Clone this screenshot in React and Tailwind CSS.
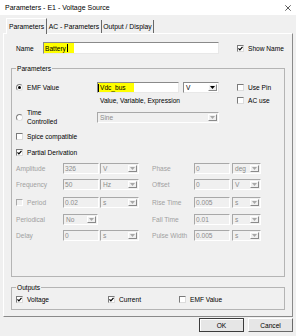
import React from "react";

function CheckMark({ color = "#000" }) {
  return (
    <svg width="5" height="5" viewBox="0 0 5 5">
      <path d="M0.5 2.3 L1.9 3.9 L4.5 0.8" fill="none" stroke={color} strokeWidth="1.2" />
    </svg>
  );
}

function Box({ checked, disabled }) {
  return (
    <span
      className={
        disabled
          ? "flex h-[7px] w-[7px] shrink-0 items-center justify-center border border-t-[#a8a8a8] border-l-[#a8a8a8] border-b-white border-r-white bg-[#f0f0f0]"
          : "flex h-[7px] w-[7px] shrink-0 items-center justify-center border border-t-[#7a7a7a] border-l-[#7a7a7a] border-b-[#dcdcdc] border-r-[#dcdcdc] bg-white"
      }
    >
      {checked && <CheckMark />}
    </span>
  );
}

function Radio({ checked }) {
  return (
    <span className="flex h-[7px] w-[7px] shrink-0 items-center justify-center rounded-full border border-t-[#808080] border-l-[#808080] border-b-[#e0e0e0] border-r-[#e0e0e0] bg-white">
      {checked && <span className="h-[3px] w-[3px] rounded-full bg-black" />}
    </span>
  );
}

function Arrow({ disabled }) {
  return (
    <span className="flex h-full w-[9px] shrink-0 items-center justify-center border border-t-white border-l-white border-b-[#8a8a8a] border-r-[#8a8a8a] bg-[#f0f0f0]">
      <svg width="5" height="3" viewBox="0 0 5 3">
        <path d="M0 0 H5 L2.5 3 Z" fill={disabled ? "#a8a8a8" : "#000"} />
      </svg>
    </span>
  );
}

function Sel({ w, value, disabled }) {
  return (
    <div
      className={`flex h-[11px] shrink-0 items-stretch border p-[1px] ${w} ${
        disabled
          ? "border-t-[#a8a8a8] border-l-[#a8a8a8] border-b-white border-r-white bg-[#f0f0f0] text-[#8c8c8c]"
          : "border-t-[#8a8a8a] border-l-[#8a8a8a] border-b-[#e8e8e8] border-r-[#e8e8e8] bg-white text-black"
      }`}
    >
      <span className="flex flex-1 items-center pl-[1px]">{value}</span>
      <Arrow disabled={disabled} />
    </div>
  );
}

function DInput({ w, value }) {
  return (
    <div
      className={`flex h-[11px] shrink-0 items-center border border-t-[#a8a8a8] border-l-[#a8a8a8] border-b-white border-r-white bg-[#f0f0f0] pl-[1px] text-[#8c8c8c] ${w}`}
    >
      {value}
    </div>
  );
}

function Label({ children }) {
  return <span className="text-[#a0a0a0]">{children}</span>;
}

function PRow({ mt, left, right }) {
  return (
    <div className={`flex h-[11px] items-center ${mt}`}>
      <div className="flex w-[136px] items-center">{left}</div>
      <div className="flex items-center">{right}</div>
    </div>
  );
}

export default function App() {
  return (
    <div className="relative flex h-[336px] w-[296px] flex-col overflow-hidden bg-[#f0f0f0] font-['Liberation_Sans',Arial,sans-serif] text-[6.6px] leading-[9px] text-black">
      {/* title bar */}
      <div className="flex h-[15px] shrink-0 items-center justify-between bg-white pl-[5px] pr-[5px]">
        <span className="text-[7px]">Parameters - E1 - Voltage Source</span>
        <svg width="6" height="6" viewBox="0 0 6 6">
          <path d="M0.3 0.3 L5.7 5.7 M5.7 0.3 L0.3 5.7" stroke="#333" strokeWidth="0.8" />
        </svg>
      </div>

      {/* tabs */}
      <div className="mt-[3px] flex h-[15px] shrink-0 items-end pl-[6px] text-[6.8px]">
        <div className="relative z-10 -mb-px flex h-[16px] items-center border-t border-l border-r border-t-white border-l-white border-r-[#696969] bg-[#f0f0f0] px-[2px]">
          Parameters
        </div>
        <div className="flex h-[13px] items-center border-r border-r-[#696969] px-[1.5px]">AC - Parameters</div>
        <div className="flex h-[13px] items-center border-r border-r-[#696969] px-[1.5px]">Output / Display</div>
      </div>

      {/* panel */}
      <div className="mx-[3px] flex h-[284px] shrink-0 flex-col border border-t-white border-l-white border-b-[#8a8a8a] border-r-[#8a8a8a] px-[7px]">
        {/* name row */}
        <div className="mt-[8px] flex h-[12px] items-center">
          <span className="ml-[5px] w-[27px]">Name</span>
          <div className="flex h-[12px] w-[176px] items-stretch border border-t-[#8a8a8a] border-l-[#8a8a8a] border-b-[#e8e8e8] border-r-[#e8e8e8] bg-white">
            <span className="flex w-[30px] items-center bg-[#ffff00] pl-[1px]">
              Battery
              <span className="ml-[1px] h-[8px] w-[1px] bg-black" />
            </span>
          </div>
          <div className="ml-[18px] flex items-center">
            <Box checked />
            <span className="ml-[4px]">Show Name</span>
          </div>
        </div>

        {/* Parameters group */}
        <fieldset className="mt-[10px] h-[213px] border border-[#b4b4b4] px-[4px]">
          <legend className="px-[1px] leading-[9px]">Parameters</legend>

          {/* EMF row */}
          <div className="mt-[9px] flex h-[11px] items-center">
            <div className="flex w-[81px] items-center">
              <Radio checked />
              <span className="ml-[4px]">EMF Value</span>
            </div>
            <div className="flex h-[11px] w-[82px] shrink-0 items-stretch border border-t-[#8a8a8a] border-l-[#8a8a8a] border-b-[#e8e8e8] border-r-[#e8e8e8] bg-white">
              <span className="flex w-[36px] items-center bg-[#ffff00]">
                <span className="mr-[1px] h-[8px] w-[1px] bg-black" />
                Vdc_bus
              </span>
            </div>
            <div className="ml-[4px]">
              <Sel w="w-[36px]" value="V" />
            </div>
            <div className="ml-[18px] flex items-center">
              <Box />
              <span className="ml-[4px]">Use Pin</span>
            </div>
          </div>

          {/* hint row */}
          <div className="mt-[3px] flex h-[9px] items-center">
            <span className="ml-[84px] w-[137px]">Value, Variable, Expression</span>
            <Box />
            <span className="ml-[4px]">AC use</span>
          </div>

          {/* time controlled */}
          <div className="mt-[3px] flex h-[18px] items-center">
            <div className="flex w-[81px] items-center">
              <Radio />
              <div className="ml-[4px] flex flex-col leading-[9px]">
                <span>Time</span>
                <span>Controlled</span>
              </div>
            </div>
            <Sel w="w-[122px]" value="Sine" disabled />
          </div>

          <div className="mt-[6px] flex h-[9px] items-center">
            <Box />
            <span className="ml-[4px]">Spice compatible</span>
          </div>

          <div className="mt-[7px] flex h-[9px] items-center">
            <Box checked />
            <span className="ml-[4px]">Partial Derivation</span>
          </div>

          <PRow
            mt="mt-[6px]"
            left={
              <>
                <span className="w-[47px] text-[#a0a0a0]">Amplitude</span>
                <DInput w="w-[36px]" value="326" />
                <div className="ml-[1px]"><Sel w="w-[39px]" value="V" disabled /></div>
              </>
            }
            right={
              <>
                <span className="w-[42px]"><Label>Phase</Label></span>
                <DInput w="w-[36px]" value="0" />
                <div className="ml-[2px]"><Sel w="w-[29px]" value="deg" disabled /></div>
              </>
            }
          />
          <PRow
            mt="mt-[5px]"
            left={
              <>
                <span className="w-[47px] text-[#a0a0a0]">Frequency</span>
                <DInput w="w-[36px]" value="50" />
                <div className="ml-[1px]"><Sel w="w-[39px]" value="Hz" disabled /></div>
              </>
            }
            right={
              <>
                <span className="w-[42px]"><Label>Offset</Label></span>
                <DInput w="w-[36px]" value="0" />
                <div className="ml-[2px]"><Sel w="w-[29px]" value="V" disabled /></div>
              </>
            }
          />
          <PRow
            mt="mt-[7px]"
            left={
              <>
                <span className="flex w-[47px] items-center">
                  <Box disabled />
                  <span className="ml-[4px] text-[#a0a0a0]">Period</span>
                </span>
                <DInput w="w-[36px]" value="0.02" />
                <div className="ml-[1px]"><Sel w="w-[39px]" value="s" disabled /></div>
              </>
            }
            right={
              <>
                <span className="w-[42px]"><Label>Rise Time</Label></span>
                <DInput w="w-[36px]" value="0.005" />
                <div className="ml-[2px]"><Sel w="w-[29px]" value="s" disabled /></div>
              </>
            }
          />
          <PRow
            mt="mt-[6px]"
            left={
              <>
                <span className="w-[47px] text-[#a0a0a0]">Periodical</span>
                <Sel w="w-[35px]" value="No" disabled />
              </>
            }
            right={
              <>
                <span className="w-[42px]"><Label>Fall Time</Label></span>
                <DInput w="w-[36px]" value="0.01" />
                <div className="ml-[2px]"><Sel w="w-[29px]" value="s" disabled /></div>
              </>
            }
          />
          <PRow
            mt="mt-[5px]"
            left={
              <>
                <span className="w-[47px] text-[#a0a0a0]">Delay</span>
                <DInput w="w-[36px]" value="0" />
                <div className="ml-[1px]"><Sel w="w-[39px]" value="s" disabled /></div>
              </>
            }
            right={
              <>
                <span className="w-[42px]"><Label>Pulse Width</Label></span>
                <DInput w="w-[36px]" value="0.005" />
                <div className="ml-[2px]"><Sel w="w-[29px]" value="s" disabled /></div>
              </>
            }
          />
        </fieldset>

        {/* Outputs group */}
        <fieldset className="mt-[6px] h-[27px] border border-[#b4b4b4] px-[4px]">
          <legend className="px-[1px] leading-[9px]">Outputs</legend>
          <div className="mt-[3px] flex h-[9px] items-center">
            <div className="flex w-[92px] items-center">
              <Box checked />
              <span className="ml-[4px]">Voltage</span>
            </div>
            <div className="flex w-[71px] items-center">
              <Box checked />
              <span className="ml-[4px]">Current</span>
            </div>
            <div className="flex items-center">
              <Box />
              <span className="ml-[4px]">EMF Value</span>
            </div>
          </div>
        </fieldset>
      </div>

      {/* buttons */}
      <div className="mt-[1px] flex justify-end gap-[4px] pr-[3px]">
        <button className="flex h-[14px] w-[45px] items-center justify-center border border-[#3c3c3c] bg-[#e6e6e6] shadow-[inset_1px_1px_0_white]">
          OK
        </button>
        <button className="flex h-[14px] w-[45px] items-center justify-center border border-t-white border-l-white border-b-[#696969] border-r-[#696969] bg-[#e6e6e6]">
          Cancel
        </button>
      </div>
    </div>
  );
}
